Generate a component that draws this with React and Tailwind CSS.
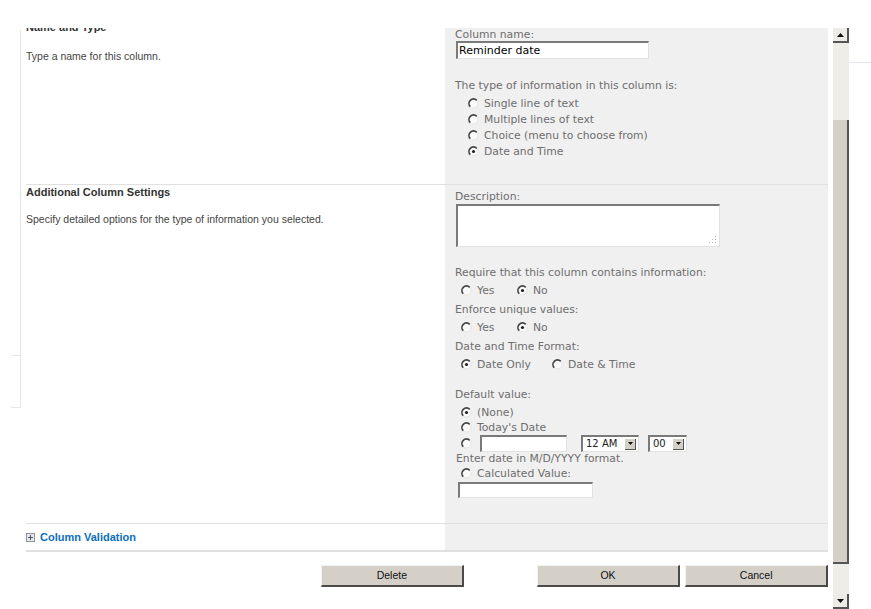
import React from "react";

const LABEL = "text-[10.8px] leading-[13px] text-[#6e6e6e] font-['DejaVu_Sans',Verdana,sans-serif] whitespace-nowrap";

function Radio({ checked }) {
  return (
    <svg width="11" height="11" viewBox="0 0 11 11" className="shrink-0">
      <circle cx="5.5" cy="5.5" r="4.5" fill="#fafafa" stroke="#e4e4e4" strokeWidth="1" />
      <path d="M8.7 2.3 A4.5 4.5 0 0 0 2.3 8.7" fill="none" stroke="#444" strokeWidth="1.7" />
      {checked && <circle cx="5.5" cy="5.5" r="1.6" fill="#222" />}
    </svg>
  );
}

function Option({ checked, label, className = "" }) {
  return (
    <div className={`flex items-center gap-[5px] ${className}`}>
      <Radio checked={checked} />
      <span className={LABEL}>{label}</span>
    </div>
  );
}

function Field({ className = "", children }) {
  return (
    <div
      className={`bg-white border-t-2 border-l-2 border-r border-b border-t-[#7a7a7a] border-l-[#7a7a7a] border-r-[#e2e2e2] border-b-[#e2e2e2] ${className}`}
    >
      {children}
    </div>
  );
}

function Select({ value, className = "" }) {
  return (
    <Field className={`flex items-center justify-between pl-[3px] pr-[2px] ${className}`}>
      <span className="text-[10px] leading-none text-[#222] font-['DejaVu_Sans',Verdana,sans-serif]">{value}</span>
      <span className="w-[11px] h-[11px] bg-[#d4d0c8] border-r border-b border-[#555] flex items-center justify-center">
        <svg width="5" height="3" viewBox="0 0 5 3">
          <path d="M0 0h5L2.5 3z" fill="#111" />
        </svg>
      </span>
    </Field>
  );
}

function Button({ children, className = "" }) {
  return (
    <button
      className={`h-[22px] bg-[#d4d0c8] border-t border-l border-r-2 border-b-2 border-t-[#f2f2f2] border-l-[#f2f2f2] border-r-[#4a4a4a] border-b-[#4a4a4a] text-[10.5px] text-[#111] font-['Liberation_Sans',Tahoma,sans-serif] ${className}`}
    >
      {children}
    </button>
  );
}

function ArrowButton({ up }) {
  return (
    <div className="h-[15px] bg-[#ecebe6] border-r-2 border-b-2 border-[#555] flex items-center justify-center">
      <svg width="7" height="4" viewBox="0 0 7 4">
        <path d={up ? "M0 4h7L3.5 0z" : "M0 0h7L3.5 4z"} fill="#111" />
      </svg>
    </div>
  );
}

export default function App() {
  return (
    <div className="w-[871px] h-[609px] bg-white flex overflow-hidden font-['Liberation_Sans',Tahoma,sans-serif]">
      {/* left gutter lines */}
      <div className="w-[26px] shrink-0 flex flex-col items-end pt-[30px]">
        <div className="w-[6px] h-[325px] border-r border-[#e6e6e6] mr-[5px]" />
        <div className="w-[10px] h-[53px] border-r border-t border-b border-[#e6e6e6] mr-[5px]" />
      </div>

      {/* form */}
      <div className="w-[802px] shrink-0 flex flex-col pt-[28px]">
        {/* Name and Type */}
        <div className="flex h-[157px] border-b border-[#e0e0e0]">
          <div className="w-[419px] overflow-hidden">
            <div className="-mt-[7px] text-[11px] leading-[13px] font-bold text-[#333]">Name and Type</div>
            <div className="mt-[16px] text-[10.5px] leading-[13px] text-[#444]">Type a name for this column.</div>
          </div>
          <div className="w-[383px] bg-[#f0f0f0] pl-[10px]">
            <div className={LABEL}>Column name:</div>
            <Field className="w-[193px] h-[18px] ml-[1px] flex items-center pl-[1px]">
              <span className="text-[11px] leading-none text-black font-['DejaVu_Sans',Verdana,sans-serif]">Reminder date</span>
            </Field>
            <div className={`${LABEL} mt-[20px]`}>The type of information in this column is:</div>
            <div className="pl-[13px] mt-[3px]">
              <Option label="Single line of text" className="h-[16px]" />
              <Option label="Multiple lines of text" className="h-[16px]" />
              <Option label="Choice (menu to choose from)" className="h-[16px]" />
              <Option checked label="Date and Time" className="h-[17px]" />
            </div>
          </div>
        </div>

        {/* Additional Column Settings */}
        <div className="flex h-[339px] border-b border-[#e0e0e0]">
          <div className="w-[419px]">
            <div className="mt-[1px] text-[11px] leading-[13px] font-bold text-[#333]">Additional Column Settings</div>
            <div className="mt-[14px] text-[10.5px] leading-[13px] text-[#444]">
              Specify detailed options for the type of information you selected.
            </div>
          </div>
          <div className="w-[383px] bg-[#f0f0f0] pl-[10px] pt-[5px]">
            <div className={LABEL}>Description:</div>
            <Field className="w-[264px] h-[43px] ml-[1px] mt-[1px] relative">
              <svg width="8" height="8" viewBox="0 0 8 8" className="absolute right-[2px] bottom-[2px]">
                <g fill="#b5b5b5">
                  <rect x="6" y="0" width="1" height="1" />
                  <rect x="3" y="3" width="1" height="1" />
                  <rect x="6" y="3" width="1" height="1" />
                  <rect x="0" y="6" width="1" height="1" />
                  <rect x="3" y="6" width="1" height="1" />
                  <rect x="6" y="6" width="1" height="1" />
                </g>
              </svg>
            </Field>

            <div className={`${LABEL} mt-[19px]`}>Require that this column contains information:</div>
            <div className="flex pl-[6px] mt-[3px] h-[16px]">
              <Option label="Yes" className="w-[56px]" />
              <Option checked label="No" />
            </div>

            <div className={`${LABEL} mt-[5px]`}>Enforce unique values:</div>
            <div className="flex pl-[6px] mt-[3px] h-[16px]">
              <Option label="Yes" className="w-[56px]" />
              <Option checked label="No" />
            </div>

            <div className={`${LABEL} mt-[5px]`}>Date and Time Format:</div>
            <div className="flex pl-[6px] mt-[3px] h-[16px]">
              <Option checked label="Date Only" className="w-[91px]" />
              <Option label="Date & Time" />
            </div>

            <div className={`${LABEL} mt-[16px]`}>Default value:</div>
            <div className="pl-[6px] mt-[3px]">
              <Option checked label="(None)" className="h-[16px]" />
              <Option label="Today's Date" className="h-[15px]" />
              <div className="flex items-center h-[17px]">
                <Radio />
                <Field className="w-[87px] h-[17px] ml-[8px]" />
                <Select value="12 AM" className="w-[58px] h-[17px] ml-[14px]" />
                <Select value="00" className="w-[39px] h-[17px] ml-[9px]" />
              </div>
            </div>
            <div className={`${LABEL} ml-[1px]`}>Enter date in M/D/YYYY format.</div>
            <Option label="Calculated Value:" className="pl-[6px] h-[16px]" />
            <Field className="w-[135px] h-[16px] ml-[3px] mt-[1px]" />
          </div>
        </div>

        {/* Column Validation */}
        <div className="flex h-[28px] border-b-2 border-[#e0e0e0]">
          <div className="w-[419px] flex items-center gap-[5px]">
            <svg width="9" height="9" viewBox="0 0 9 9">
              <rect x="0.5" y="0.5" width="8" height="8" fill="#e8e8ea" stroke="#8f96a0" />
              <path d="M2 4.5h5M4.5 2v5" stroke="#4a5360" strokeWidth="1" />
            </svg>
            <span className="text-[11px] font-bold text-[#0b6fbf]">Column Validation</span>
          </div>
          <div className="w-[383px] bg-[#f0f0f0]" />
        </div>

        {/* buttons */}
        <div className="flex mt-[13px] pl-[295px]">
          <Button className="w-[143px]">Delete</Button>
          <Button className="w-[144px] ml-[73px]">OK</Button>
          <Button className="w-[143px] ml-[5px]">Cancel</Button>
        </div>
      </div>

      {/* scrollbar */}
      <div className="w-[16px] shrink-0 ml-[5px] flex flex-col pt-[28px]">
        <ArrowButton up />
        <div className="flex-1 bg-[#eeede8] flex flex-col pt-[77px] pb-[30px]">
          <div className="flex-1 bg-[#d4d0c8] border-r-2 border-b-2 border-[#555]" />
        </div>
        <ArrowButton />
      </div>

      <div className="flex-1 pt-[62px]">
        <div className="h-px bg-[#e3e8ee]" />
      </div>
    </div>
  );
}
